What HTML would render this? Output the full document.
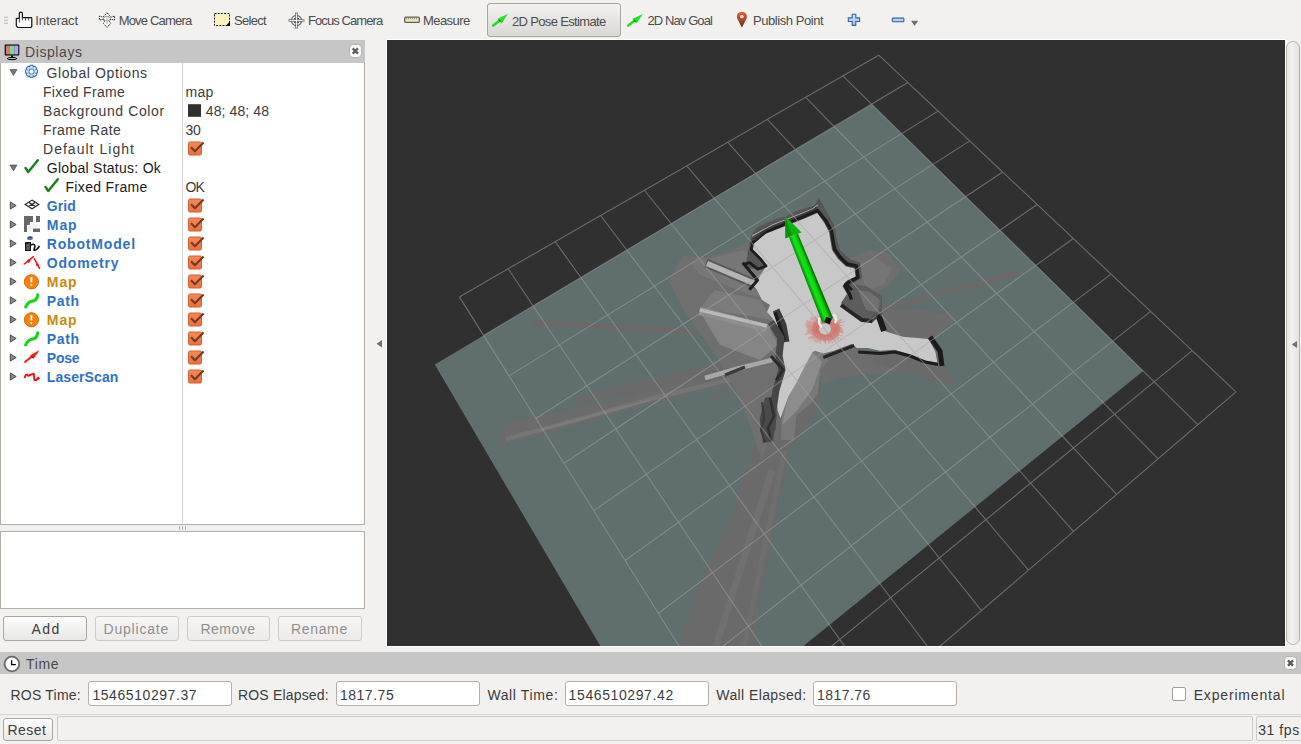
<!DOCTYPE html>
<html><head><meta charset="utf-8">
<style>
html,body{margin:0;padding:0;}
body{width:1301px;height:744px;position:relative;overflow:hidden;background:#f2f1f0;font-family:"Liberation Sans",sans-serif;}
.a{position:absolute;box-sizing:border-box;}
.t{position:absolute;white-space:pre;line-height:1;font-family:"Liberation Sans",sans-serif;}
.btn{position:absolute;box-sizing:border-box;border:1px solid #a9a59f;border-radius:3px;background:linear-gradient(#fcfcfc,#e9e8e6);}
.btnd{position:absolute;box-sizing:border-box;border:1px solid #cfccc7;border-radius:3px;background:linear-gradient(#f7f6f5,#ecebe9);}
.inp{position:absolute;box-sizing:border-box;border:1px solid #b3aea8;border-radius:3px;background:#fff;}
.cb{position:absolute;width:14px;height:14px;box-sizing:border-box;border:1px solid #c2562a;border-radius:2px;background:linear-gradient(#f58a5c,#e8693a);}
svg{position:absolute;overflow:visible;}
</style></head><body>
<!-- toolbar -->
<div class="a" style="left:0;top:0;width:1301px;height:40px;background:#f2f1f0;"></div>
<!-- pressed button -->
<div class="a" style="left:487px;top:3px;width:134px;height:34px;border:1px solid #a8a49e;border-radius:3px;background:linear-gradient(#f4f3f2,#e8e6e3 45%,#dad8d4);"></div>
<!-- dock header Displays -->
<div class="a" style="left:0;top:40px;width:365px;height:23px;background:#c6c6c6;"></div>
<div class="a" style="left:349px;top:44px;width:13px;height:14px;background:#fafafa;border:1px solid #b8b4ae;border-radius:4px;"></div>
<!-- tree panel -->
<div class="a" style="left:0;top:63px;width:365px;height:462px;background:#fff;border:1px solid #b2afa9;border-top:none;"></div>
<div class="a" style="left:182px;top:63px;width:1px;height:461px;background:#d6d6d6;"></div>
<!-- splitter grip -->
<div class="a" style="left:179px;top:526px;width:1px;height:4px;background:#b3afa9;"></div>
<div class="a" style="left:182px;top:526px;width:1px;height:4px;background:#b3afa9;"></div>
<div class="a" style="left:185px;top:526px;width:1px;height:4px;background:#b3afa9;"></div>
<!-- description box -->
<div class="a" style="left:0;top:531px;width:365px;height:78px;background:#fff;border:1px solid #b2afa9;"></div>
<!-- buttons -->
<div class="btn" style="left:3px;top:616px;width:84px;height:25px;"></div>
<div class="btnd" style="left:95px;top:616px;width:84px;height:25px;"></div>
<div class="btnd" style="left:187px;top:616px;width:83px;height:25px;"></div>
<div class="btnd" style="left:278px;top:616px;width:84px;height:25px;"></div>
<!-- left splitter arrow -->
<svg style="left:0;top:0" width="1301" height="744"><polygon points="382,340 382,347.5 376.5,343.7" fill="#6e6e6e"/></svg>
<!-- 3D viewport -->
<div class="a" style="left:386px;top:39px;width:900px;height:608px;background:#fff;"></div>
<div class="a" id="vp" style="left:387px;top:40px;width:898px;height:606px;background:#303030;overflow:hidden;">
<svg style="left:0;top:0" width="898" height="606"><g transform="translate(-387,-40)">
<polygon points="871.6,104.2 434.8,364.5 665.8,757.5 1143.2,371.0" fill="#5e6f6e"/>
<polyline points="531.0,322.8 697.0,331.6" fill="none" stroke="#6b6867" stroke-width="5.5" stroke-linejoin="round" stroke-linecap="butt" />
<polyline points="877.0,311.0 1019.0,272.0" fill="none" stroke="#6c6a69" stroke-width="5.5" stroke-linejoin="round" stroke-linecap="butt" />
<polyline points="914.0,313.0 955.0,316.0" fill="none" stroke="#6c6a69" stroke-width="5" stroke-linejoin="round" stroke-linecap="butt" />
<polygon points="573.0,397.0 650.0,377.5 741.0,359.0 743.0,368.0 650.0,390.0 576.0,404.0" fill="#6a6a6a" />
<polygon points="505.0,423.0 580.0,407.0 650.0,390.0 745.0,368.0 748.0,381.0 650.0,404.0 580.0,424.0 498.0,447.0" fill="#6b6b6b" />
<polyline points="506.0,439.0 580.0,419.0 650.0,399.0 745.0,376.0" fill="none" stroke="#757575" stroke-width="4.5" stroke-linejoin="round" stroke-linecap="butt" />
<polyline points="540.0,430.0 650.0,400.0" fill="none" stroke="#7c7c7c" stroke-width="2" stroke-linejoin="round" stroke-linecap="butt" />
<polyline points="712.0,399.6 735.0,387.8" fill="none" stroke="#6a6a6a" stroke-width="5" stroke-linejoin="round" stroke-linecap="butt" />
<polygon points="824.6,394.3 810.3,422.9 788.8,451.5 774.5,530.2 760.2,594.5 754.9,646.0 678.0,646.0 703.0,576.6 731.6,515.9 745.9,469.4 756.6,444.4 770.0,420.0 790.0,395.0" fill="#6a6a6a" />
<polyline points="772.0,470.0 716.0,646.0" fill="none" stroke="#707070" stroke-width="7" stroke-linejoin="round" stroke-linecap="butt" />
<polyline points="785.0,450.0 744.0,646.0" fill="none" stroke="#6e6e6e" stroke-width="5" stroke-linejoin="round" stroke-linecap="butt" />
<polygon points="682.2,256.1 706.4,257.5 730.6,250.7 749.4,241.3 760.0,250.0 775.0,300.0 785.6,352.3 782.6,387.8 773.8,423.3 761.9,460.0 747.2,417.4 732.4,381.9 717.6,358.2 696.9,328.7 683.6,309.9 668.8,281.6" fill="#6f6f6f" />
<polygon points="690.0,262.0 720.0,256.0 745.0,250.0 760.0,265.0 770.0,300.0 750.0,295.0 725.0,285.0 700.0,275.0" fill="#777777" />
<polygon points="700.0,312.0 768.0,325.0 778.0,345.0 760.0,360.0 720.0,345.0" fill="#858585" />
<polygon points="715.0,290.0 760.0,300.0 772.0,320.0 700.0,308.0" fill="#7b7b7b" />
<polyline points="699.7,311.0 766.9,328.0" fill="none" stroke="#8e8e8e" stroke-width="8" stroke-linejoin="round" stroke-linecap="butt" />
<polyline points="699.7,309.9 766.9,326.0" fill="none" stroke="#bababa" stroke-width="3.5" stroke-linejoin="round" stroke-linecap="butt" />
<polyline points="705.0,378.0 740.0,368.0 772.0,360.0" fill="none" stroke="#a8a8a8" stroke-width="4.5" stroke-linejoin="round" stroke-linecap="butt" />
<polyline points="725.0,375.0 745.0,367.0" fill="none" stroke="#3a3a3a" stroke-width="3" stroke-linejoin="round" stroke-linecap="butt" />
<polyline points="706.0,263.0 760.0,286.0" fill="none" stroke="#585858" stroke-width="9" stroke-linejoin="round" stroke-linecap="butt" />
<polyline points="707.0,263.5 758.0,285.0" fill="none" stroke="#b4b4b4" stroke-width="5.5" stroke-linejoin="round" stroke-linecap="butt" />
<polygon points="849.6,257.8 871.1,249.7 887.2,252.4 900.6,269.9 889.9,283.3 868.4,300.0 855.0,300.0 853.6,272.6" fill="#6e6e6e" />
<polygon points="860.0,264.0 876.0,257.0 892.0,269.0 884.0,284.0 866.0,292.0" fill="#757575" />
<polygon points="879.4,313.1 913.8,308.8 954.6,315.3 935.3,338.9 903.0,336.8 881.5,330.3" fill="#6c6c6c" />
<polygon points="818.0,362.0 854.0,347.0 880.0,354.0 900.0,358.0 902.0,370.0 870.0,374.0 840.0,378.0 822.0,384.0" fill="#6d6d6d" />
<polygon points="873.0,352.0 920.0,356.0 940.0,362.0 959.0,386.0 935.0,382.0 900.0,370.0 873.0,362.0" fill="#6a6a6a" />
<polygon points="751.3,235.3 757.7,227.3 775.5,219.2 786.8,216.0 796.5,211.1 814.2,205.5 819.0,198.2 825.5,209.5 834.0,225.0 837.0,240.0 840.0,250.0 849.7,259.0 860.0,262.7 862.0,278.0 852.0,284.0 855.0,300.0 858.0,318.0 845.0,318.0 835.0,300.0 810.0,260.0 770.0,270.0 745.0,268.0" fill="#565656" />
<polygon points="840.0,292.0 852.0,284.0 866.0,286.0 882.0,296.0 882.0,316.0 862.0,323.0 846.0,312.0" fill="#5c5c5c" />
<polygon points="858.0,290.0 870.0,292.0 880.0,300.0 878.0,312.0 866.0,310.0" fill="#707070" />
<polygon points="815.2,340.0 828.7,360.2 820.6,369.6 817.9,393.7 809.9,404.5 796.4,415.2 793.7,440.0 781.0,440.0 781.6,415.2 788.4,396.4 796.4,383.0 804.5,366.9 812.6,352.1" fill="#787878" />
<polygon points="812.6,352.1 822.0,362.0 812.0,390.0 796.0,412.0 782.0,425.0 788.4,396.4 796.4,383.0 804.5,366.9" fill="#8c8c8c" />
<polygon points="752.9,243.4 765.8,233.7 786.8,225.6 802.9,219.2 817.4,213.0 824.0,222.5 829.0,232.0 830.5,241.0 832.0,250.0 838.0,259.0 846.0,266.5 854.5,268.5 855.5,276.5 847.0,280.5 842.5,286.0 847.0,294.0 841.0,303.0 852.0,313.0 862.0,321.0 878.0,319.0 881.5,330.3 903.0,336.8 928.8,338.9 935.3,351.8 937.4,362.6 924.5,360.4 909.5,354.0 894.4,349.7 880.0,350.7 867.6,348.1 856.9,348.1 851.5,344.0 834.0,350.7 823.3,353.4 815.2,350.7 812.6,352.1 804.5,366.9 796.4,383.0 788.4,396.4 781.6,415.2 780.3,417.9 777.6,409.9 776.3,396.4 780.3,384.3 783.0,369.6 779.0,353.4 780.3,340.0 780.0,330.0 772.3,318.0 767.0,312.0 770.0,305.0 762.0,300.0 757.0,290.0 752.0,284.0 757.5,280.3 766.0,266.0 761.0,259.5 751.3,249.8" fill="#c8c8c8" />
<polyline points="751.0,244.0 765.0,232.0 786.0,223.5 802.5,217.0 817.5,210.5 826.0,221.0 831.5,231.0 833.0,240.5 834.5,249.0 840.0,257.0 847.0,264.0 856.5,266.0 858.0,277.5 849.0,282.0 845.0,286.0 849.5,294.0 851.5,299.5" fill="none" stroke="#1c1c1c" stroke-width="3.4" stroke-linejoin="round" stroke-linecap="butt" />
<polyline points="753.0,240.0 766.0,229.0 786.0,220.5 802.0,214.0 817.0,207.0" fill="none" stroke="#3a3a3a" stroke-width="3" stroke-linejoin="round" stroke-linecap="butt" />
<polyline points="752.5,243.5 751.3,249.8 761.0,259.5 766.0,266.0 757.7,269.2 749.7,262.7 743.2,264.4" fill="none" stroke="#1c1c1c" stroke-width="2.8" stroke-linejoin="round" stroke-linecap="butt" />
<polyline points="742.7,262.8 757.5,280.3 749.4,289.7" fill="none" stroke="#1c1c1c" stroke-width="3" stroke-linejoin="round" stroke-linecap="butt" />
<polyline points="776.0,310.0 783.0,325.0 786.0,342.0" fill="none" stroke="#3a3a3a" stroke-width="7" stroke-linejoin="round" stroke-linecap="butt" />
<polyline points="775.0,312.5 784.4,340.0" fill="none" stroke="#1c1c1c" stroke-width="3.5" stroke-linejoin="round" stroke-linecap="butt" />
<polyline points="771.0,322.0 781.0,338.0 779.0,356.0 782.0,370.0 776.0,390.0 773.0,410.0 772.0,430.0" fill="none" stroke="#474747" stroke-width="7" stroke-linejoin="round" stroke-linecap="butt" />
<polyline points="770.9,356.1 783.0,369.6 776.3,380.3" fill="none" stroke="#2a2a2a" stroke-width="3" stroke-linejoin="round" stroke-linecap="butt" />
<polygon points="765.0,398.0 773.0,396.5 776.7,415.3 773.0,441.6 763.0,443.0 759.7,419.0" fill="#4a4a4a" />
<polyline points="770.0,398.0 774.0,416.0 768.0,428.0 771.0,441.0" fill="none" stroke="#303030" stroke-width="2.6" stroke-linejoin="round" stroke-linecap="butt" />
<polyline points="762.0,402.0 764.0,418.0 761.0,430.0 765.0,442.0" fill="none" stroke="#3a3a3a" stroke-width="2.2" stroke-linejoin="round" stroke-linecap="butt" />
<polyline points="823.3,357.5 854.2,345.4" fill="none" stroke="#262626" stroke-width="3.2" stroke-linejoin="round" stroke-linecap="butt" />
<polyline points="858.2,352.1 880.0,353.4 895.0,352.0 910.0,356.0 925.0,362.0 938.0,364.5" fill="none" stroke="#1c1c1c" stroke-width="3" stroke-linejoin="round" stroke-linecap="butt" />
<polyline points="878.0,314.0 884.0,331.0" fill="none" stroke="#1c1c1c" stroke-width="6" stroke-linejoin="round" stroke-linecap="butt" />
<polyline points="876.0,316.0 870.0,322.0" fill="none" stroke="#444" stroke-width="4" stroke-linejoin="round" stroke-linecap="butt" />
<polyline points="930.0,337.0 940.0,351.0 942.0,366.0" fill="none" stroke="#1c1c1c" stroke-width="5" stroke-linejoin="round" stroke-linecap="butt" />
<polyline points="845.0,283.0 852.0,290.0" fill="none" stroke="#1c1c1c" stroke-width="3" stroke-linejoin="round" stroke-linecap="butt" />
<polyline points="841.0,305.0 852.0,313.0 862.0,320.0 872.0,321.0" fill="none" stroke="#262626" stroke-width="4" stroke-linejoin="round" stroke-linecap="butt" />
<polyline points="752.0,236.0 772.0,225.0 786.0,219.5 800.0,214.0 812.0,209.0 818.0,205.0" fill="none" stroke="#d4d4d4" stroke-width="1" stroke-linejoin="round" stroke-linecap="butt" opacity="0.75"/>
<path d="M878.78,55.18L1235.96,391.82M878.78,55.18L459.40,296.90M842.82,75.91L1197.77,424.64M907.84,82.57L483.63,335.42M805.69,97.31L1158.04,458.80M938.13,111.12L509.07,375.89M767.36,119.41L1116.65,494.38M969.73,140.90L535.84,418.45M727.75,142.23L1073.50,531.46M1002.72,171.99L564.03,463.28M686.80,165.84L1028.49,570.15M1037.20,204.49L593.75,510.55M644.45,190.25L981.49,610.56M1073.28,238.49L625.15,560.48M600.61,215.51L932.35,652.80M1111.06,274.11L658.37,613.30M555.22,241.68L880.94,696.99M1150.68,311.44L693.56,669.26M508.18,268.79L827.09,743.28M1192.26,350.63L730.91,728.66M459.40,296.90L770.62,791.81M1235.96,391.82L770.62,791.81" stroke="rgba(165,165,168,0.5)" stroke-width="1.1" fill="none"/>
<path d="M831.0,329.0L841.6,329.0M831.0,329.4L843.7,330.0M831.0,329.8L842.3,330.8M830.9,330.1L843.7,331.9M830.8,330.5L843.5,332.9M830.7,330.9L839.5,332.9M830.5,331.2L838.7,333.5M830.3,331.6L843.3,336.2M830.1,331.9L839.2,335.6M829.9,332.2L838.4,336.2M829.6,332.5L841.7,339.4M829.4,332.8L838.1,338.3M829.0,333.1L838.9,340.4M828.7,333.3L836.2,339.6M828.4,333.6L835.8,340.9M828.0,333.8L833.0,339.2M827.7,333.9L833.5,341.8M827.3,334.1L832.8,343.4M826.9,334.2L830.7,342.0M826.5,334.3L829.9,343.4M826.1,334.4L828.4,343.3M825.6,334.5L826.6,340.3M825.2,334.5L825.7,343.9M824.8,334.5L824.3,343.1M824.4,334.5L823.2,341.5M823.9,334.4L822.4,340.0M823.5,334.3L819.9,344.0M823.1,334.2L819.4,341.8M822.7,334.1L817.5,342.6M822.3,333.9L815.8,343.0M822.0,333.8L815.1,341.7M821.6,333.6L813.1,342.1M821.3,333.3L814.1,339.3M821.0,333.1L811.3,340.2M820.6,332.8L812.0,338.3M820.4,332.5L808.6,339.2M820.1,332.2L808.0,338.1M819.9,331.9L811.8,335.1M819.7,331.6L811.0,334.5M819.5,331.2L810.0,333.9M819.3,330.9L804.7,334.5M819.2,330.5L807.7,332.7M819.1,330.1L806.1,332.0M819.0,329.8L808.1,330.8M819.0,329.4L806.6,330.0M819.0,329.0L807.4,329.0M819.0,328.6L807.7,328.1M819.0,328.2L806.2,327.0M819.1,327.9L806.4,326.1M819.2,327.5L804.6,324.7M819.3,327.1L806.5,324.0M819.5,326.8L805.5,322.6M819.7,326.4L806.6,321.8M819.9,326.1L806.5,320.5M820.1,325.8L809.2,320.5M820.4,325.5L812.7,321.4M820.6,325.2L810.0,318.3M821.0,324.9L810.5,317.1M821.3,324.7L812.0,316.7M821.6,324.4L814.4,317.4M822.0,324.2L815.1,316.3M822.3,324.1L817.8,318.1M822.7,323.9L817.3,314.8M823.1,323.8L819.2,315.7M823.5,323.7L820.9,316.9M823.9,323.6L822.3,317.8M824.4,323.5L822.8,313.7M824.8,323.5L824.2,312.9M825.2,323.5L825.5,317.5M825.6,323.5L827.1,313.9M826.1,323.6L828.1,316.1M826.5,323.7L828.9,317.5M826.9,323.8L830.2,317.1M827.3,323.9L832.6,315.1M827.7,324.1L834.2,315.1M828.0,324.2L832.6,319.2M828.4,324.4L835.7,317.2M828.7,324.7L834.4,320.1M829.0,324.9L838.3,318.1M829.4,325.2L837.4,320.2M829.6,325.5L841.1,319.0M829.9,325.8L842.6,319.6M830.1,326.1L840.6,321.8M830.3,326.4L844.3,321.4M830.5,326.8L840.6,323.9M830.7,327.1L839.5,325.1M830.8,327.5L843.3,325.1M830.9,327.9L839.8,326.7M831.0,328.2L841.2,327.3M831.0,328.6L842.7,328.1" stroke="rgba(215,75,55,0.42)" stroke-width="0.8"/>
<ellipse cx="826" cy="329" rx="11" ry="9" fill="none" stroke="rgba(214,80,64,0.3)" stroke-width="6"/>
<path d="M819.5,317.5 Q818,324 822,327 M833,314 Q838,319 835,323" stroke="#ececec" stroke-width="2.6" fill="none"/>
<defs><linearGradient id="gsh" gradientUnits="userSpaceOnUse" x1="789.0" y1="237.3" x2="798.0" y2="233.7"><stop offset="0" stop-color="#0a8a0a"/><stop offset="0.35" stop-color="#12e812"/><stop offset="0.7" stop-color="#0cd40c"/><stop offset="1" stop-color="#067006"/></linearGradient></defs>
<polygon points="789.0,237.3 822.4,322.7 833.2,318.3 798.0,233.7" fill="url(#gsh)"/>
<polygon points="785.1,216.1 785.1,238.6 801.6,232.6" fill="#0cb40c"/>
<polygon points="785.1,216.1 786,238 792,235.5" fill="#08900a"/>
<rect x="825" y="317.5" width="6" height="6" fill="#151515" transform="rotate(20 828 320.5)"/>
</g></svg>
</div>
<!-- right strip -->
<div class="a" style="left:1286px;top:41px;width:14px;height:604px;border:1px solid #b8b4ae;border-radius:7px;background:linear-gradient(90deg,#e8e7e5,#f2f1f0 40%,#e4e2df);"></div>
<svg style="left:0;top:0" width="1301" height="744"><polygon points="1297,341 1297,348 1291.8,344.5" fill="#707070"/></svg>
<!-- time dock header -->
<div class="a" style="left:0;top:652px;width:1301px;height:22px;background:#c6c6c6;"></div>
<div class="a" style="left:1284px;top:656px;width:13px;height:14px;background:#fafafa;border:1px solid #b8b4ae;border-radius:4px;"></div>
<!-- inputs -->
<div class="inp" style="left:88px;top:681px;width:144px;height:25px;"></div>
<div class="inp" style="left:336px;top:681px;width:144px;height:25px;"></div>
<div class="inp" style="left:565px;top:681px;width:144px;height:25px;"></div>
<div class="inp" style="left:813px;top:681px;width:144px;height:25px;"></div>
<div class="a" style="left:1172px;top:687px;width:14px;height:14px;border:1px solid #a19d97;border-radius:2px;background:#fff;"></div>
<!-- status bar -->
<div class="a" style="left:0;top:714px;width:1301px;height:1px;background:#d9d6d2;"></div>
<div class="btn" style="left:3px;top:718px;width:50px;height:23px;"></div>
<div class="a" style="left:57px;top:716px;width:1196px;height:25px;border:1px solid #cfccc7;border-radius:2px;"></div>
<div class="a" style="left:1256px;top:716px;width:50px;height:25px;border:1px solid #cfccc7;border-radius:2px;"></div>
<svg style="left:0;top:0" width="1301" height="744">
<defs><linearGradient id="pin" x1="0" y1="0" x2="0" y2="1"><stop offset="0" stop-color="#ee5230"/><stop offset="0.5" stop-color="#b5482a"/><stop offset="1" stop-color="#4a2a05"/></linearGradient><linearGradient id="cbg" x1="0" y1="0" x2="0" y2="1"><stop offset="0" stop-color="#f48a5a"/><stop offset="1" stop-color="#ea7040"/></linearGradient><linearGradient id="blu" x1="0" y1="0" x2="0" y2="1"><stop offset="0" stop-color="#d8e6f8"/><stop offset="1" stop-color="#9cbde6"/></linearGradient></defs>
<rect x="4" y="16.7" width="4" height="1.3" fill="#c9c5be"/>
<rect x="4" y="19.7" width="4" height="1.3" fill="#c9c5be"/>
<rect x="4" y="22.7" width="4" height="1.3" fill="#c9c5be"/>
<path d="M19.6,27.5 L18,27.5 L16.3,25.8 L16.3,18.6 L19.3,18.1 L19.3,13.3 Q19.3,12.2 20.9,12.2 Q22.4,12.2 22.4,13.3 L22.4,17.6 L31.2,17.6 Q31.8,17.6 31.8,18.4 L31.8,26.4 L30.9,27.5 Z" fill="#fff" stroke="#111" stroke-width="1.2" stroke-linejoin="round"/>
<path d="M19.4,18.2 L19.4,22.5 M22.4,17.6 L22.4,20.5 M25.5,17.8 L25.5,20.5 M28.6,17.8 L28.6,20.5" stroke="#333" stroke-width="0.9"/>
<path d="M107,12.8 L111,17.2 L114.6,16 L114.6,20 L110.5,19.2 L109.5,21.5 L110.5,23.5 L107,27.4 L103.5,23.5 L104.5,21.5 L103.5,19.2 L99.4,20 L99.4,16 L103,17.2 Z" fill="#fff" stroke="#2a2a2a" stroke-width="1" stroke-dasharray="1.6,0.9" stroke-linejoin="round"/>
<ellipse cx="107" cy="18.6" rx="3.6" ry="2.2" fill="none" stroke="#333" stroke-width="0.9" stroke-dasharray="1.2,0.8"/>
<rect x="106.4" y="16" width="1.2" height="8" fill="#bbb"/>
<rect x="214.5" y="13.5" width="15" height="12" fill="#fcf3bc" stroke="#111" stroke-width="1" stroke-dasharray="2,1.2"/>
<polygon points="230,21.5 230,26 225.5,26" fill="#000"/>
<g stroke="#6c6c6c" fill="none"><circle cx="296.5" cy="20.5" r="5.1" stroke-width="1.2" fill="#fff"/><path d="M296.5,12.6 V28.4 M288.6,20.5 H304.4" stroke-width="2.6"/><path d="M296.5,13.4 V27.6 M289.4,20.5 H303.6" stroke="#fff" stroke-width="0.9"/><path d="M294,18 h1.3 v1.3 h-1.3z M297.7,18 h1.3 v1.3 h-1.3z M294,21.7 h1.3 v1.3 h-1.3z M297.7,21.7 h1.3 v1.3 h-1.3z" fill="#444" stroke="none"/></g>
<rect x="404.7" y="17.2" width="14.6" height="5.2" rx="1" fill="#f2e8a8" stroke="#5e5e5e" stroke-width="1.3"/>
<path d="M406.4,17.8 v1.5 M408.4,17.8 v1.5 M410.4,17.8 v1.5 M412.4,17.8 v1.5 M414.4,17.8 v1.5 M416.4,17.8 v1.5" stroke="#777" stroke-width="0.8"/>
<g transform="translate(0,0)"><path d="M493.3,25.6 L499.8,20.4" stroke="#1ee61e" stroke-width="2.6" stroke-linecap="round"/><polygon points="507.8,14 497.6,18.8 501.8,23.2" fill="#1ee61e"/><path d="M498.6,19.6 L501.1,22.2" stroke="#138a13" stroke-width="1.2"/></g>
<g transform="translate(135,0)"><path d="M493.3,25.6 L499.8,20.4" stroke="#1ee61e" stroke-width="2.6" stroke-linecap="round"/><polygon points="507.8,14 497.6,18.8 501.8,23.2" fill="#1ee61e"/><path d="M498.6,19.6 L501.1,22.2" stroke="#138a13" stroke-width="1.2"/></g>
<path d="M741.9,27.4 L738.2,20.5 Q736.9,18.8 736.9,16.7 Q736.9,11.9 741.9,11.9 Q746.9,11.9 746.9,16.7 Q746.9,18.8 745.6,20.5 Z" fill="url(#pin)"/>
<circle cx="741.9" cy="16.6" r="1.8" fill="#fff"/>
<path d="M852.2,14.3 h3.6 v3.6 h3.8 v3.6 h-3.8 v3.9 h-3.6 v-3.9 h-3.9 v-3.6 h3.9 z" fill="url(#blu)" stroke="#2f63a8" stroke-width="1.1"/>
<rect x="892.3" y="18.1" width="11.6" height="3.6" rx="0.8" fill="url(#blu)" stroke="#2f63a8" stroke-width="1.1"/>
<polygon points="911,20.8 918.2,20.8 914.6,26" fill="#707070"/>
<rect x="4.7" y="44.5" width="14.6" height="11" rx="1" fill="#000"/>
<rect x="5.8" y="45.6" width="4.2" height="8.8" fill="#d27a7a"/><rect x="10" y="45.6" width="4.2" height="8.8" fill="#86d886"/><rect x="14.2" y="45.6" width="4.1" height="8.8" fill="#a8a8f0"/>
<rect x="11" y="55.5" width="2.2" height="2" fill="#000"/><ellipse cx="12" cy="58.6" rx="4.8" ry="1.1" fill="none" stroke="#000" stroke-width="1"/>
<path d="M352.7,48.4 L357.90000000000003,53.6 M357.90000000000003,48.4 L352.7,53.6" stroke="#5a5a5a" stroke-width="2.2"/>
<path d="M1287.9,660.4 L1293.1,665.6 M1293.1,660.4 L1287.9,665.6" stroke="#5a5a5a" stroke-width="2.2"/>
<polygon points="9.9,69.5 17,69.5 13.45,75.5" fill="#777" stroke="#444" stroke-width="0.6"/>
<polygon points="9.9,165.0 17,165.0 13.45,171.0" fill="#777" stroke="#444" stroke-width="0.6"/>
<polygon points="10.3,201.9 16.2,205.5 10.3,209.1" fill="#888" stroke="#333" stroke-width="0.8"/>
<polygon points="10.3,220.9 16.2,224.5 10.3,228.1" fill="#888" stroke="#333" stroke-width="0.8"/>
<polygon points="10.3,239.9 16.2,243.5 10.3,247.1" fill="#888" stroke="#333" stroke-width="0.8"/>
<polygon points="10.3,258.9 16.2,262.5 10.3,266.1" fill="#888" stroke="#333" stroke-width="0.8"/>
<polygon points="10.3,277.9 16.2,281.5 10.3,285.1" fill="#888" stroke="#333" stroke-width="0.8"/>
<polygon points="10.3,296.9 16.2,300.5 10.3,304.1" fill="#888" stroke="#333" stroke-width="0.8"/>
<polygon points="10.3,315.9 16.2,319.5 10.3,323.1" fill="#888" stroke="#333" stroke-width="0.8"/>
<polygon points="10.3,334.9 16.2,338.5 10.3,342.1" fill="#888" stroke="#333" stroke-width="0.8"/>
<polygon points="10.3,353.9 16.2,357.5 10.3,361.1" fill="#888" stroke="#333" stroke-width="0.8"/>
<polygon points="10.3,372.9 16.2,376.5 10.3,380.1" fill="#888" stroke="#333" stroke-width="0.8"/>
<polygon points="35.99,69.71 37.52,69.93 37.52,72.87 35.99,73.09 35.87,73.38 36.80,74.62 34.72,76.70 33.48,75.77 33.19,75.89 32.97,77.42 30.03,77.42 29.81,75.89 29.52,75.77 28.28,76.70 26.20,74.62 27.13,73.38 27.01,73.09 25.48,72.87 25.48,69.93 27.01,69.71 27.13,69.42 26.20,68.18 28.28,66.10 29.52,67.03 29.81,66.91 30.03,65.38 32.97,65.38 33.19,66.91 33.48,67.03 34.72,66.10 36.80,68.18 35.87,69.42" fill="#dbe7f7" stroke="#3a78c8" stroke-width="1.1" stroke-linejoin="round"/>
<circle cx="31.5" cy="71.4" r="2.6" fill="#fff" stroke="#5a90d8" stroke-width="1.2"/>
<path d="M25.5,168 L28.3,172 L37.8,160.3" fill="none" stroke="#1b7a1b" stroke-width="2.4" stroke-linecap="round" stroke-linejoin="round"/>
<path d="M45.5,187 L48.3,191 L57.8,179.3" fill="none" stroke="#1b7a1b" stroke-width="2.4" stroke-linecap="round" stroke-linejoin="round"/>
<g transform="translate(32,204.4)" fill="none" stroke="#2a2a2a" stroke-width="1.2"><path d="M0,-4.3 L6.8,0 L0,4.3 L-6.8,0 Z M-3.4,-2.15 L3.4,2.15 M3.4,-2.15 L-3.4,2.15"/></g>
<g transform="translate(24,216)"><rect x="0" y="0" width="16" height="16" fill="#fff"/><path d="M0,0 h9 v6 h-3 v3 h-3 v7 h-3 z" fill="#686868"/><rect x="12" y="0" width="4" height="6" fill="#686868"/><rect x="9" y="12.5" width="7" height="3.5" fill="#686868"/><path d="M6,7 v9 M9,7 v5 M12,7 v5 M3,10 h13 M3,13 h6" stroke="#ddd" stroke-width="0.6"/></g>
<ellipse cx="30" cy="238.2" rx="2.8" ry="1.9" fill="#1f3f9f"/><path d="M27.4,239 h5.4" stroke="#e8d070" stroke-width="0.7"/>
<path d="M25,251 V243 Q25,242 26.5,242 H31 V251 Z" fill="#111"/><path d="M27,244 v6 M29,243 v7" stroke="#ddd" stroke-width="0.7"/>
<path d="M31,245 Q34,243 35,246 L34,250 Q36,251 39.5,246" fill="none" stroke="#111" stroke-width="1.6"/>
<path d="M24.3,264 L33.4,256.6 M34.4,258.8 L39.5,268.3" stroke="#f01010" stroke-width="1.5" stroke-linecap="round"/>
<path d="M27.5,262 l2.5,-2 M37,264 l1,2" stroke="#f01010" stroke-width="2.6"/>
<circle cx="31.4" cy="281.8" r="7.1" fill="#f5820f" stroke="#d36a08" stroke-width="1"/>
<path d="M31.4,277.2 V282.40000000000003" stroke="#fff" stroke-width="1.9"/><circle cx="31.4" cy="284.90000000000003" r="1" fill="#fff"/>
<circle cx="31.4" cy="319.8" r="7.1" fill="#f5820f" stroke="#d36a08" stroke-width="1"/>
<path d="M31.4,315.2 V320.40000000000003" stroke="#fff" stroke-width="1.9"/><circle cx="31.4" cy="322.90000000000003" r="1" fill="#fff"/>
<path d="M25.6,307.0 Q28.5,301.5 32,301.3 Q36.8,300.7 37.8,294.7" fill="none" stroke="#12d612" stroke-width="3" stroke-linecap="round"/>
<path d="M25.6,345.0 Q28.5,339.5 32,339.3 Q36.8,338.7 37.8,332.7" fill="none" stroke="#12d612" stroke-width="3" stroke-linecap="round"/>
<path d="M25,362 L32,356.4" stroke="#ff1a0a" stroke-width="2" stroke-linecap="round"/><polygon points="39.6,350 30.5,355.3 33.8,358.5" fill="#ff1a0a"/><path d="M30.7,355.6 L33.4,358.2" stroke="#6a0000" stroke-width="1"/>
<polyline points="24.4,378 25.8,375.1 26.8,374.6 28.4,375.9 30.6,374.6 33.8,373.8 34.4,380 36.5,380 38.1,377.8 39.5,378.9" fill="none" stroke="#ff0a0a" stroke-width="1.9" stroke-linejoin="round"/>
<rect x="188.5" y="142.0" width="13" height="13" rx="1.5" fill="url(#cbg)" stroke="#d4602c" stroke-width="1"/>
<path d="M191,147.3 L194.9,151.3 L203.6,142.5" fill="none" stroke="#7a3a1e" stroke-width="2.2" stroke-linejoin="round"/>
<rect x="188.5" y="199.0" width="13" height="13" rx="1.5" fill="url(#cbg)" stroke="#d4602c" stroke-width="1"/>
<path d="M191,204.3 L194.9,208.3 L203.6,199.5" fill="none" stroke="#7a3a1e" stroke-width="2.2" stroke-linejoin="round"/>
<rect x="188.5" y="218.0" width="13" height="13" rx="1.5" fill="url(#cbg)" stroke="#d4602c" stroke-width="1"/>
<path d="M191,223.3 L194.9,227.3 L203.6,218.5" fill="none" stroke="#7a3a1e" stroke-width="2.2" stroke-linejoin="round"/>
<rect x="188.5" y="237.0" width="13" height="13" rx="1.5" fill="url(#cbg)" stroke="#d4602c" stroke-width="1"/>
<path d="M191,242.3 L194.9,246.3 L203.6,237.5" fill="none" stroke="#7a3a1e" stroke-width="2.2" stroke-linejoin="round"/>
<rect x="188.5" y="256.0" width="13" height="13" rx="1.5" fill="url(#cbg)" stroke="#d4602c" stroke-width="1"/>
<path d="M191,261.3 L194.9,265.3 L203.6,256.5" fill="none" stroke="#7a3a1e" stroke-width="2.2" stroke-linejoin="round"/>
<rect x="188.5" y="275.0" width="13" height="13" rx="1.5" fill="url(#cbg)" stroke="#d4602c" stroke-width="1"/>
<path d="M191,280.3 L194.9,284.3 L203.6,275.5" fill="none" stroke="#7a3a1e" stroke-width="2.2" stroke-linejoin="round"/>
<rect x="188.5" y="294.0" width="13" height="13" rx="1.5" fill="url(#cbg)" stroke="#d4602c" stroke-width="1"/>
<path d="M191,299.3 L194.9,303.3 L203.6,294.5" fill="none" stroke="#7a3a1e" stroke-width="2.2" stroke-linejoin="round"/>
<rect x="188.5" y="313.0" width="13" height="13" rx="1.5" fill="url(#cbg)" stroke="#d4602c" stroke-width="1"/>
<path d="M191,318.3 L194.9,322.3 L203.6,313.5" fill="none" stroke="#7a3a1e" stroke-width="2.2" stroke-linejoin="round"/>
<rect x="188.5" y="332.0" width="13" height="13" rx="1.5" fill="url(#cbg)" stroke="#d4602c" stroke-width="1"/>
<path d="M191,337.3 L194.9,341.3 L203.6,332.5" fill="none" stroke="#7a3a1e" stroke-width="2.2" stroke-linejoin="round"/>
<rect x="188.5" y="351.0" width="13" height="13" rx="1.5" fill="url(#cbg)" stroke="#d4602c" stroke-width="1"/>
<path d="M191,356.3 L194.9,360.3 L203.6,351.5" fill="none" stroke="#7a3a1e" stroke-width="2.2" stroke-linejoin="round"/>
<rect x="188.5" y="370.0" width="13" height="13" rx="1.5" fill="url(#cbg)" stroke="#d4602c" stroke-width="1"/>
<path d="M191,375.3 L194.9,379.3 L203.6,370.5" fill="none" stroke="#7a3a1e" stroke-width="2.2" stroke-linejoin="round"/>
<rect x="188" y="104.2" width="13" height="12.6" fill="#303030"/>
<circle cx="11.9" cy="664" r="7.3" fill="#fff" stroke="#6a6a6a" stroke-width="1.8"/><path d="M11.6,660.3 V664.6 H15.8" fill="none" stroke="#000" stroke-width="1.3"/>
</svg>
<span class="t" style="left:35.30px;top:14.00px;font-size:13px;letter-spacing:-0.078px;color:#4c4c4c;">Interact</span>
<span class="t" style="left:118.70px;top:14.00px;font-size:13px;letter-spacing:-0.811px;color:#4c4c4c;">Move Camera</span>
<span class="t" style="left:234.00px;top:14.00px;font-size:13px;letter-spacing:-0.704px;color:#4c4c4c;">Select</span>
<span class="t" style="left:308.00px;top:14.00px;font-size:13px;letter-spacing:-0.911px;color:#4c4c4c;">Focus Camera</span>
<span class="t" style="left:423.00px;top:14.00px;font-size:13px;letter-spacing:-0.558px;color:#4c4c4c;">Measure</span>
<span class="t" style="left:512.00px;top:15.00px;font-size:13px;letter-spacing:-0.654px;color:#4c4c4c;">2D Pose Estimate</span>
<span class="t" style="left:647.50px;top:14.00px;font-size:13px;letter-spacing:-0.903px;color:#4c4c4c;">2D Nav Goal</span>
<span class="t" style="left:753.00px;top:14.00px;font-size:13px;letter-spacing:-0.439px;color:#4c4c4c;">Publish Point</span>
<span class="t" style="left:25.00px;top:45.15px;font-size:14px;letter-spacing:0.585px;color:#4a4a4a;">Displays</span>
<span class="t" style="left:46.40px;top:65.85px;font-size:14px;letter-spacing:0.623px;color:#3c3c3c;">Global Options</span>
<span class="t" style="left:43.00px;top:84.85px;font-size:14px;letter-spacing:0.321px;color:#3c3c3c;">Fixed Frame</span>
<span class="t" style="left:185.60px;top:84.85px;font-size:14px;letter-spacing:0.276px;color:#3c3c3c;">map</span>
<span class="t" style="left:43.00px;top:103.85px;font-size:14px;letter-spacing:0.600px;color:#3c3c3c;">Background Color</span>
<span class="t" style="left:205.80px;top:103.85px;font-size:14px;letter-spacing:0.101px;color:#3c3c3c;">48; 48; 48</span>
<span class="t" style="left:43.00px;top:122.85px;font-size:14px;letter-spacing:0.431px;color:#3c3c3c;">Frame Rate</span>
<span class="t" style="left:185.60px;top:122.85px;font-size:14px;letter-spacing:-0.286px;color:#3c3c3c;">30</span>
<span class="t" style="left:43.00px;top:141.85px;font-size:14px;letter-spacing:1.024px;color:#3c3c3c;">Default Light</span>
<span class="t" style="left:46.80px;top:160.85px;font-size:14px;letter-spacing:0.268px;color:#1a1a1a;">Global Status: Ok</span>
<span class="t" style="left:65.50px;top:179.85px;font-size:14px;letter-spacing:0.321px;color:#1a1a1a;">Fixed Frame</span>
<span class="t" style="left:185.60px;top:179.85px;font-size:14px;letter-spacing:-0.890px;color:#3c3c3c;">OK</span>
<span class="t" style="left:46.80px;top:198.85px;font-size:14px;letter-spacing:0.091px;color:#2f72c5;font-weight:bold;">Grid</span>
<span class="t" style="left:46.80px;top:217.85px;font-size:14px;letter-spacing:0.926px;color:#2f72c5;font-weight:bold;">Map</span>
<span class="t" style="left:46.80px;top:236.85px;font-size:14px;letter-spacing:0.825px;color:#2f72c5;font-weight:bold;">RobotModel</span>
<span class="t" style="left:46.80px;top:255.85px;font-size:14px;letter-spacing:0.809px;color:#2f72c5;font-weight:bold;">Odometry</span>
<span class="t" style="left:46.80px;top:274.85px;font-size:14px;letter-spacing:0.926px;color:#c98a12;font-weight:bold;">Map</span>
<span class="t" style="left:46.80px;top:293.85px;font-size:14px;letter-spacing:0.638px;color:#2f72c5;font-weight:bold;">Path</span>
<span class="t" style="left:46.80px;top:312.85px;font-size:14px;letter-spacing:0.926px;color:#c98a12;font-weight:bold;">Map</span>
<span class="t" style="left:46.80px;top:331.85px;font-size:14px;letter-spacing:0.638px;color:#2f72c5;font-weight:bold;">Path</span>
<span class="t" style="left:46.80px;top:350.85px;font-size:14px;letter-spacing:-0.225px;color:#2f72c5;font-weight:bold;">Pose</span>
<span class="t" style="left:46.80px;top:369.85px;font-size:14px;letter-spacing:0.091px;color:#2f72c5;font-weight:bold;">LaserScan</span>
<span class="t" style="left:31.60px;top:622.15px;font-size:14px;letter-spacing:1.338px;color:#3c3c3c;">Add</span>
<span class="t" style="left:103.50px;top:622.15px;font-size:14px;letter-spacing:0.803px;color:#8f8f8f;">Duplicate</span>
<span class="t" style="left:200.40px;top:622.15px;font-size:14px;letter-spacing:0.491px;color:#8f8f8f;">Remove</span>
<span class="t" style="left:291.00px;top:622.15px;font-size:14px;letter-spacing:0.654px;color:#8f8f8f;">Rename</span>
<span class="t" style="left:26.00px;top:656.95px;font-size:14px;letter-spacing:0.665px;color:#4a4a4a;">Time</span>
<span class="t" style="left:10.50px;top:688.15px;font-size:14px;letter-spacing:0.210px;color:#3c3c3c;">ROS Time:</span>
<span class="t" style="left:92.40px;top:688.15px;font-size:14px;letter-spacing:0.572px;color:#3c3c3c;">1546510297.37</span>
<span class="t" style="left:238.00px;top:688.15px;font-size:14px;letter-spacing:0.180px;color:#3c3c3c;">ROS Elapsed:</span>
<span class="t" style="left:339.90px;top:688.15px;font-size:14px;letter-spacing:0.530px;color:#3c3c3c;">1817.75</span>
<span class="t" style="left:487.40px;top:688.15px;font-size:14px;letter-spacing:0.624px;color:#3c3c3c;">Wall Time:</span>
<span class="t" style="left:568.60px;top:688.15px;font-size:14px;letter-spacing:0.605px;color:#3c3c3c;">1546510297.42</span>
<span class="t" style="left:716.30px;top:688.15px;font-size:14px;letter-spacing:0.401px;color:#3c3c3c;">Wall Elapsed:</span>
<span class="t" style="left:817.00px;top:688.15px;font-size:14px;letter-spacing:0.447px;color:#3c3c3c;">1817.76</span>
<span class="t" style="left:1193.70px;top:688.15px;font-size:14px;letter-spacing:0.828px;color:#3c3c3c;">Experimental</span>
<span class="t" style="left:7.50px;top:723.15px;font-size:14px;letter-spacing:0.454px;color:#3c3c3c;">Reset</span>
<span class="t" style="left:1258.20px;top:723.15px;font-size:14px;letter-spacing:0.572px;color:#3c3c3c;">31 fps</span>
</body></html>
